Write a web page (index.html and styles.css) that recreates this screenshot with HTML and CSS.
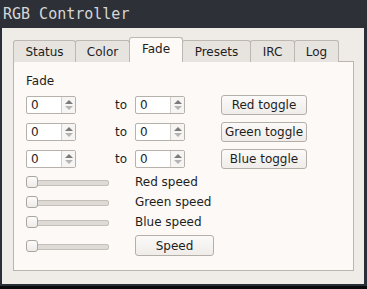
FILE: index.html
```html
<!DOCTYPE html>
<html>

<head lang="en">
    <meta charset="UTF-8">
    <title>RGB Controller</title>
    <link rel="stylesheet" href="styles.css">
</head>

<body>

    <div class="titlebar">RGB Controller</div>

    <div class="window">

        <div class="tabbar">
            <div class="tab t-status">Status</div>
            <div class="tab t-color">Color</div>
            <div class="tab tab-on t-fade">Fade</div>
            <div class="tab t-presets">Presets</div>
            <div class="tab t-irc">IRC</div>
            <div class="tab t-log">Log</div>
        </div>

        <div class="pane">

            <div class="caption">Fade</div>

            <div class="fade-row">
                <div class="spin"><span class="val">0</span><span class="arrows"><i class="up"></i><i class="down"></i></span></div>
                <span class="to">to</span>
                <div class="spin"><span class="val">0</span><span class="arrows"><i class="up"></i><i class="down"></i></span></div>
                <button class="btn btn-toggle">Red toggle</button>
            </div>

            <div class="fade-row">
                <div class="spin"><span class="val">0</span><span class="arrows"><i class="up"></i><i class="down"></i></span></div>
                <span class="to">to</span>
                <div class="spin"><span class="val">0</span><span class="arrows"><i class="up"></i><i class="down"></i></span></div>
                <button class="btn btn-toggle">Green toggle</button>
            </div>

            <div class="fade-row">
                <div class="spin"><span class="val">0</span><span class="arrows"><i class="up"></i><i class="down"></i></span></div>
                <span class="to">to</span>
                <div class="spin"><span class="val">0</span><span class="arrows"><i class="up"></i><i class="down"></i></span></div>
                <button class="btn btn-toggle">Blue toggle</button>
            </div>

            <div class="speeds">
                <div class="speed-row">
                    <div class="slider"><span class="handle"></span></div>
                    <span class="label">Red speed</span>
                </div>
                <div class="speed-row">
                    <div class="slider"><span class="handle"></span></div>
                    <span class="label">Green speed</span>
                </div>
                <div class="speed-row">
                    <div class="slider"><span class="handle"></span></div>
                    <span class="label">Blue speed</span>
                </div>
                <div class="speed-row speed-last">
                    <div class="slider"><span class="handle"></span></div>
                    <button class="btn btn-speed">Speed</button>
                </div>
            </div>

        </div>

    </div>

    <div class="bottom"></div>

</body>

</html>
```

FILE: styles.css
```css
* {
    box-sizing: border-box;
}

body {
    margin: 0;
    width: 367px;
    height: 289px;
    overflow: hidden;
    background: #2a2e38;
    font-family: "DejaVu Sans", sans-serif;
    font-size: 12px;
    color: #1e1e1e;
}

.titlebar {
    height: 28px;
    padding-left: 3px;
    line-height: 28px;
    background: #2d3037;
    color: #d6d6d6;
    font-family: "DejaVu Sans Mono", monospace;
    font-size: 15px;
}

.window {
    margin-left: 2px;
    width: 362px;
    height: 256px;
    padding: 11px 0 0 11px;
    background: #efebe7;
}

.bottom {
    height: 3px;
    margin-top: 2px;
    background: #0b0b0d;
}

/* tabs */
.tabbar {
    display: flex;
    align-items: flex-end;
    height: 23px;
    position: relative;
    z-index: 1;
}

.tab {
    height: 22px;
    margin-right: -1px;
    border: 1px solid #bcb7b1;
    border-bottom: none;
    border-radius: 3px 3px 0 0;
    background: #e7e3df;
    text-align: center;
    line-height: 22px;
}

.tab-on {
    height: 25px;
    background: #fcf9f6;
    line-height: 22px;
}

.t-status { width: 63px; }
.t-color { width: 55px; }
.t-fade { width: 54px; }
.t-presets { width: 69px; }
.t-irc { width: 45px; }
.t-log { width: 45px; }

.pane {
    width: 341px;
    height: 210px;
    margin-top: -1px;
    padding: 12px 0 0 12px;
    border: 1px solid #bab5af;
    background: #fcf9f6;
}

.caption {
    height: 15px;
    line-height: 15px;
    margin-bottom: 6px;
}

/* spin rows */
.fade-row {
    display: flex;
    align-items: center;
    height: 20px;
    margin-bottom: 7px;
}

.spin {
    display: flex;
    width: 50px;
    height: 18px;
    border: 1px solid #b6b1ab;
    border-radius: 2px;
    background: #fff;
}

.val {
    flex: 1;
    padding-left: 4px;
    line-height: 16px;
}

.arrows {
    display: flex;
    flex-direction: column;
    justify-content: center;
    align-items: center;
    gap: 2px;
    width: 14px;
    border-left: 1px solid #d2cdc8;
    background: #f7f5f3;
}

.up,
.down {
    width: 0;
    height: 0;
    border-left: 4px solid transparent;
    border-right: 4px solid transparent;
}

.up {
    border-bottom: 4px solid #7b7b7b;
}

.down {
    border-top: 4px solid #b4b4b4;
}

.to {
    width: 59px;
    padding-right: 8px;
    text-align: right;
}

.btn {
    height: 20px;
    padding: 0;
    border: 1px solid #b4afa9;
    border-radius: 3px;
    background: linear-gradient(#fbfaf9, #efece9);
    font-family: "DejaVu Sans", sans-serif;
    font-size: 12px;
    color: #1e1e1e;
}

.btn-toggle {
    width: 86px;
    margin-left: 36px;
}

/* speed sliders */
.speeds {
    margin-top: -4px;
}

.speed-row {
    display: flex;
    align-items: center;
    height: 20px;
}

.speed-last {
    height: 21px;
    margin-top: 3px;
}

.slider {
    position: relative;
    width: 83px;
    height: 12px;
    margin-right: 26px;
}

.slider::before {
    content: "";
    position: absolute;
    left: 1px;
    right: 0;
    top: 4px;
    height: 4px;
    border: 1px solid #c4bfb9;
    border-radius: 2px;
    background: #dedad6;
}

.handle {
    position: absolute;
    left: 0;
    top: 0;
    width: 12px;
    height: 12px;
    border: 1px solid #aaa5a0;
    border-radius: 3px;
    background: linear-gradient(#fdfcfb, #eeebe8);
}

.btn-speed {
    width: 79px;
    height: 21px;
}
```
